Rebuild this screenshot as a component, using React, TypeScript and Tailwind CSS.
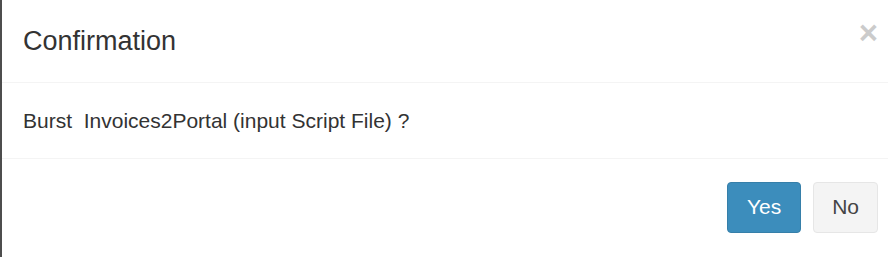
import React from 'react';

const App: React.FC = () => {
  return (
    <div className="w-[888px] h-[257px] bg-white border-l-2 border-[#4d4d4d] text-[#333] font-['Liberation_Sans',Arial,sans-serif] flex flex-col overflow-hidden">
      {/* Header */}
      <div className="h-[83px] shrink-0 flex items-start justify-between pl-[21px] pr-[10px] pt-[22px] border-b border-[#f4f4f4]">
        <h4 className="text-[27px] leading-[38.5px] font-normal m-0">Confirmation</h4>
        <button
          type="button"
          className="text-[33px] font-bold leading-none text-black opacity-20 mt-[-6px]"
          title="Close"
        >
          ×
        </button>
      </div>

      {/* Body */}
      <div className="h-[76px] shrink-0 pl-[21px] py-[22.5px] border-b border-[#f4f4f4]">
        <p className="text-[21px] leading-[30px] whitespace-pre m-0">
          Burst  <span>Invoices2Portal (input Script File)</span> ?
        </p>
      </div>

      {/* Footer */}
      <div className="flex-1 flex items-start justify-end gap-[12px] pr-[10px] pt-[22.5px]">
        <button
          type="button"
          className="h-[51px] px-[19px] text-[21px] leading-[30px] text-white bg-[#3c8dbc] border border-[#367fa9] rounded-[4px]"
        >
          Yes
        </button>
        <button
          type="button"
          className="h-[51px] px-[18px] text-[21px] leading-[30px] text-[#444] bg-[#f4f4f4] border border-[#e6e6e6] rounded-[4px]"
        >
          No
        </button>
      </div>
    </div>
  );
};

export default App;
